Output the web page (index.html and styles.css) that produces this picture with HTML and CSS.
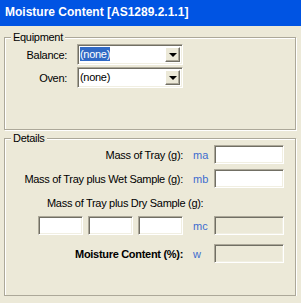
FILE: index.html
```html
<!DOCTYPE html>
<html>
  <head>
    <title>Moisture Content</title>
    <link rel="stylesheet" href="styles.css">
  </head>
  <body>
    <div class="titlebar">Moisture Content [AS1289.2.1.1]</div>

    <fieldset class="group equipment">
      <legend>Equipment</legend>
      <div class="equip-grid">
        <label>Balance:</label>
        <div class="combo">
          <span class="combo-text"><span class="selected">(none)</span></span>
          <span class="combo-btn"><span class="arrow"></span></span>
        </div>
        <label>Oven:</label>
        <div class="combo">
          <span class="combo-text">(none)</span>
          <span class="combo-btn"><span class="arrow"></span></span>
        </div>
      </div>
    </fieldset>

    <fieldset class="group details">
      <legend>Details</legend>

      <div class="row">
        <label class="lbl">Mass of Tray (g):</label>
        <span class="sym">ma</span>
        <input type="text" class="field">
      </div>

      <div class="row row-wet">
        <label class="lbl">Mass of Tray plus Wet Sample (g):</label>
        <span class="sym">mb</span>
        <input type="text" class="field">
      </div>

      <div class="dry-label">Mass of Tray plus Dry Sample (g):</div>

      <div class="row">
        <div class="dry-inputs">
          <input type="text" class="field small">
          <input type="text" class="field small">
          <input type="text" class="field small">
        </div>
        <span class="sym">mc</span>
        <input type="text" class="field" disabled>
      </div>

      <div class="row row-result">
        <label class="lbl bold">Moisture Content (%):</label>
        <span class="sym">w</span>
        <input type="text" class="field" disabled>
      </div>
    </fieldset>
  </body>
</html>
```

FILE: styles.css
```css
body {
  margin: 0;
  background-color: #ece9d8;
  font-family: "Liberation Sans", Arial, sans-serif;
  font-size: 11px;
  letter-spacing: -0.3px;
  color: #000;
}

.titlebar {
  height: 26px;
  line-height: 24px;
  padding-left: 5px;
  background-color: #0054e3;
  color: #fff;
  font-weight: bold;
  font-size: 12px;
  letter-spacing: 0;
}

/* etched group boxes */
.group {
  margin: 0 5px 0 4px;
  padding: 0;
  min-width: 0;
  border: 1px solid #aca899;
  box-shadow: inset 1px 1px 0 #fff, 1px 1px 0 #fff;
}

.group legend {
  margin-left: 6px;
  padding: 0 2px;
  line-height: 13px;
  background-color: #ece9d8;
}

.equipment {
  margin-top: 5px;
  padding-bottom: 41px;
}

.details {
  margin-top: 2px;
  padding-bottom: 32px;
}

.equip-grid {
  display: grid;
  grid-template-columns: 57px 106px;
  column-gap: 10px;
  row-gap: 2px;
  align-items: center;
  padding-left: 5px;
}

.equip-grid label {
  text-align: right;
}

.combo {
  display: flex;
  height: 21px;
  box-sizing: border-box;
  background-color: #fff;
  border: 1px solid;
  border-color: #aca899 #fff #fff #aca899;
  box-shadow: inset 1px 1px 0 #716f64, inset -1px -1px 0 #f1efe2;
  padding: 2px;
}

.combo-text {
  flex: 1;
  line-height: 15px;
}

.selected {
  background-color: #316ac5;
  color: #fff;
  padding: 1px 0;
}

.combo-btn {
  width: 15px;
  display: flex;
  align-items: center;
  justify-content: center;
  background-color: #ece9d8;
  border-top: 1px solid #fff;
  border-left: 1px solid #fff;
  border-right: 1px solid #716f64;
  border-bottom: 1px solid #716f64;
  box-shadow: inset -1px -1px 0 #aca899;
  box-sizing: border-box;
}

.arrow {
  width: 0;
  height: 0;
  border-left: 4px solid transparent;
  border-right: 4px solid transparent;
  border-top: 4px solid #000;
  margin-top: 1px;
}

.row {
  display: grid;
  grid-template-columns: 178px 31px 70px;
  align-items: center;
}

.row-wet {
  margin-top: 5px;
}

.row-result {
  margin-top: 9px;
}

.lbl {
  text-align: right;
}

.bold {
  font-weight: bold;
}

.sym {
  padding-left: 10px;
  color: #3d6ccf;
  letter-spacing: 0;
}

.dry-label {
  padding-left: 42px;
  line-height: 13px;
  margin-top: 9px;
  margin-bottom: 6px;
}

.dry-inputs {
  display: flex;
  justify-content: flex-end;
  gap: 5px;
}

.field {
  height: 19px;
  width: 70px;
  box-sizing: border-box;
  margin: 0;
  padding: 0 3px;
  font: inherit;
  background-color: #fff;
  border: 1px solid;
  border-color: #aca899 #fff #fff #aca899;
  box-shadow: inset 1px 1px 0 #716f64, inset -1px -1px 0 #f1efe2;
  outline: none;
}

.field.small {
  width: 45px;
}

.field:disabled {
  background-color: #ece9d8;
}
```
